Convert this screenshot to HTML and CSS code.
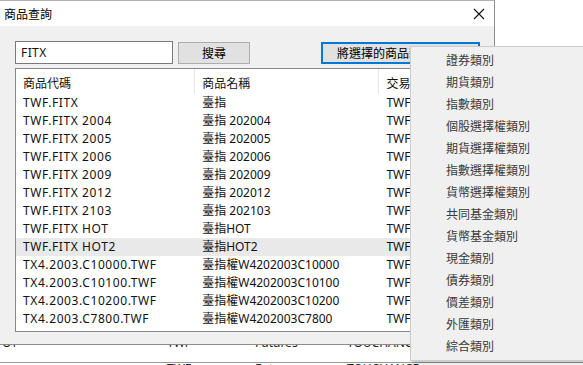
FILE: index.html
```html
<!DOCTYPE html>
<html lang="zh-Hant">
<head>
    <meta charset="UTF-8">
    <title>商品查詢</title>
    <link rel="stylesheet" href="styles.css">
</head>
<body>
    <div class="desktop">
        <div class="backdrop">
            <div class="bg-row"><span>OT</span><span>TWF</span><span>Futures</span><span>TOUCHANCE</span></div>
            <div class="bg-row bg-rule"><span></span><span>TWF</span><span>Futures</span><span>TOUCHANCE</span></div>
        </div>

        <div class="dialog">
            <div class="titlebar">
                <span class="title">商品查詢</span>
                <svg class="close" width="12" height="12" viewBox="0 0 12 12">
                    <path d="M1 1 L11 11 M11 1 L1 11" stroke="#111" stroke-width="1.1" fill="none"/>
                </svg>
            </div>
            <div class="dialog-body">
                <div class="toolbar">
                    <div class="search-box">FITX</div>
                    <button class="btn btn-search">搜尋</button>
                    <button class="btn btn-add">將選擇的商品新增</button>
                </div>
                <div class="listview">
                    <div class="lv-header">
                        <div class="col col-code">商品代碼</div>
                        <div class="col col-name">商品名稱</div>
                        <div class="col col-exch">交易所</div>
                    </div>
                    <div class="lv-row"><div class="col col-code">TWF.FITX</div><div class="col col-name">臺指</div><div class="col col-exch">TWF</div></div>
                    <div class="lv-row"><div class="col col-code">TWF.FITX 2004</div><div class="col col-name">臺指 202004</div><div class="col col-exch">TWF</div></div>
                    <div class="lv-row"><div class="col col-code">TWF.FITX 2005</div><div class="col col-name">臺指 202005</div><div class="col col-exch">TWF</div></div>
                    <div class="lv-row"><div class="col col-code">TWF.FITX 2006</div><div class="col col-name">臺指 202006</div><div class="col col-exch">TWF</div></div>
                    <div class="lv-row"><div class="col col-code">TWF.FITX 2009</div><div class="col col-name">臺指 202009</div><div class="col col-exch">TWF</div></div>
                    <div class="lv-row"><div class="col col-code">TWF.FITX 2012</div><div class="col col-name">臺指 202012</div><div class="col col-exch">TWF</div></div>
                    <div class="lv-row"><div class="col col-code">TWF.FITX 2103</div><div class="col col-name">臺指 202103</div><div class="col col-exch">TWF</div></div>
                    <div class="lv-row"><div class="col col-code">TWF.FITX HOT</div><div class="col col-name">臺指HOT</div><div class="col col-exch">TWF</div></div>
                    <div class="lv-row hover"><div class="col col-code">TWF.FITX HOT2</div><div class="col col-name">臺指HOT2</div><div class="col col-exch">TWF</div></div>
                    <div class="lv-row"><div class="col col-code">TX4.2003.C10000.TWF</div><div class="col col-name">臺指權W4202003C10000</div><div class="col col-exch">TWF</div></div>
                    <div class="lv-row"><div class="col col-code">TX4.2003.C10100.TWF</div><div class="col col-name">臺指權W4202003C10100</div><div class="col col-exch">TWF</div></div>
                    <div class="lv-row"><div class="col col-code">TX4.2003.C10200.TWF</div><div class="col col-name">臺指權W4202003C10200</div><div class="col col-exch">TWF</div></div>
                    <div class="lv-row"><div class="col col-code">TX4.2003.C7800.TWF</div><div class="col col-name">臺指權W4202003C7800</div><div class="col col-exch">TWF</div></div>
                </div>
            </div>
        </div>

        <div class="menu">
            <div class="menu-item">證券類別</div>
            <div class="menu-item">期貨類別</div>
            <div class="menu-item">指數類別</div>
            <div class="menu-item">個股選擇權類別</div>
            <div class="menu-item">期貨選擇權類別</div>
            <div class="menu-item">指數選擇權類別</div>
            <div class="menu-item">貨幣選擇權類別</div>
            <div class="menu-item">共同基金類別</div>
            <div class="menu-item">貨幣基金類別</div>
            <div class="menu-item">現金類別</div>
            <div class="menu-item">債券類別</div>
            <div class="menu-item">價差類別</div>
            <div class="menu-item">外匯類別</div>
            <div class="menu-item">綜合類別</div>
        </div>
    </div>
</body>
</html>
```

FILE: styles.css
```css
body {
    margin: 0;
    font-family: "Noto Sans", "Noto Sans CJK TC", sans-serif;
    font-size: 12px;
    color: #111;
    background: #fff;
}
.desktop {
    position: relative;
    width: 583px;
    height: 365px;
    overflow: hidden;
}

/* window behind the dialog */
.backdrop {
    display: flex;
    flex-direction: column;
    padding-top: 334px;
    color: #222;
}
.bg-row {
    display: grid;
    grid-template-columns: 165px 88px 92px 1fr;
    height: 18px;
    line-height: 18px;
    padding-left: 2px;
    white-space: nowrap;
}
.bg-rule {
    margin-top: 10px;
    border-top: 1px solid #9a9a9a;
    line-height: 12px;
}

/* dialog */
.dialog {
    position: absolute;
    left: -1px;
    top: 0;
    width: 494px;
    height: 343px;
    border: 1px solid #8c8c8c;
    border-top-color: #b0b0b0;
    background: #f0f0f0;
    display: flex;
    flex-direction: column;
}
.titlebar {
    height: 25px;
    background: #fff;
    display: flex;
    align-items: center;
    justify-content: space-between;
    padding: 0 9px 0 4px;
}
.title {
    font-size: 12px;
    color: #000;
}
.close {
    display: block;
}
.dialog-body {
    flex: 1;
    padding: 15px 14px 0 15px;
}
.toolbar {
    display: flex;
    align-items: center;
    height: 23px;
}
.search-box {
    width: 151px;
    height: 21px;
    line-height: 21px;
    padding-left: 5px;
    border: 1px solid #7a7a7a;
    background: #fff;
    letter-spacing: 0.4px;
}
.btn {
    font-family: inherit;
    font-size: 12px;
    color: #000;
    background: #e1e1e1;
    border: 1px solid #adadad;
    height: 22px;
    padding: 0;
}
.btn-search {
    width: 72px;
    margin-left: 5px;
}
.btn-add {
    width: 159px;
    margin-left: 71px;
    border: 2px solid #0078d7;
    text-align: left;
    padding-left: 14px;
    white-space: nowrap;
    overflow: hidden;
}

.listview {
    margin-top: 4px;
    height: 262px;
    border: 1px solid #828790;
    background: #fff;
    overflow: hidden;
}
.lv-header {
    display: flex;
    height: 25px;
    line-height: 30px;
}
.lv-header .col {
    border-right: 1px solid #e5e5e5;
}
.lv-row {
    display: flex;
    height: 18px;
    line-height: 18px;
}
.lv-row.hover {
    background: #e9e9e9;
}
.lv-row .col-code {
    letter-spacing: 0.6px;
}
.col {
    padding-left: 7px;
    white-space: nowrap;
    overflow: hidden;
    box-sizing: border-box;
}
.col-code {
    width: 180px;
}
.col-name {
    width: 185px;
}
.col-exch {
    width: 100px;
}

/* context menu */
.menu {
    position: absolute;
    left: 410px;
    top: 46px;
    width: 190px;
    padding: 3px 0 2px;
    background: #f0f0f0;
    border: 1px solid #cdcdcd;
    box-shadow: 2px 2px 3px rgba(0, 0, 0, 0.25);
}
.menu-item {
    height: 22px;
    line-height: 22px;
    padding-left: 35px;
    color: #3a3a3a;
}
```
